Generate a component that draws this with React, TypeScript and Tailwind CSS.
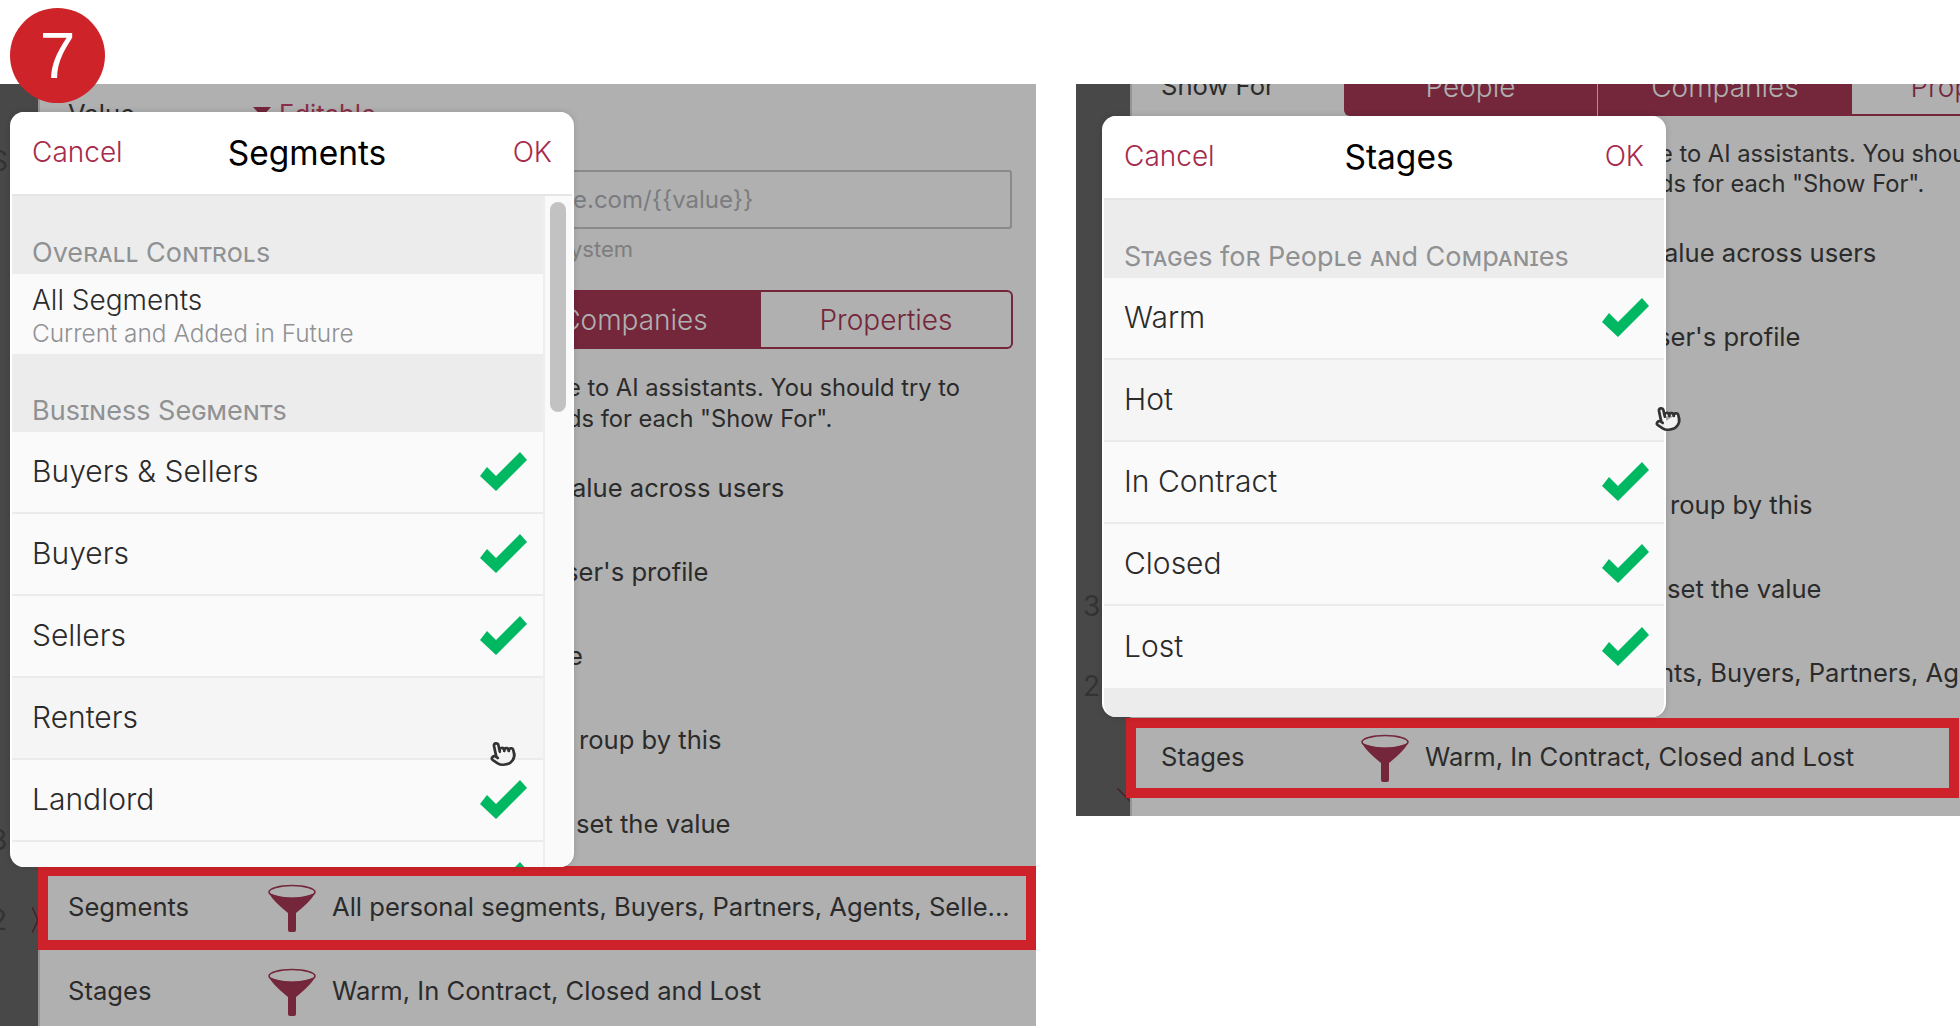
import React from "react";
import { Pointer } from "lucide-react";

const Check = () => (
  <svg width="47" height="39" viewBox="0 0 47 39" className="shrink-0 -mt-[2px]">
    <polygon points="0,24 7,15 16,24 40,0 47,8 16,39" fill="#00b862" />
  </svg>
);

const Funnel = () => (
  <svg width="48" height="48" viewBox="0 0 48 48" className="shrink-0">
    <ellipse cx="24" cy="8" rx="23" ry="6.5" fill="none" stroke="#74263b" strokeWidth="1.6" />
    <path d="M1 9 Q24 18 47 9 Q44 16 28 29 L28 46 Q28 48 26 48 L22 48 Q20 48 20 46 L20 29 Q4 16 1 9 Z" fill="#74263b" />
  </svg>
);

const Hand = ({ className }: { className: string }) => (
  <div className={"absolute blur-[0.5px] " + className}>
    <Pointer size={27} fill="#f2f2f2" stroke="#333333" strokeWidth={2.4} className="-rotate-12" />
  </div>
);

const Section = ({ label }: { label: string }) => (
  <div className="h-[78px] bg-[#ececec] flex items-end pl-[20px] pb-[5px]">
    <span className="text-[27px] leading-[32px] text-[#8f9193] [font-variant:small-caps]">{label}</span>
  </div>
);

const Row = ({ label, checked, hover, last, pr }: { label?: string; checked?: boolean; hover?: boolean; last?: boolean; pr: string }) => (
  <div className={`h-[82px] flex items-center justify-between pl-[20px] ${pr} ${last ? "" : "border-b-2 border-[#ebebeb]"} ${hover ? "bg-[#f5f5f5]" : "bg-[#fbfafb]"}`}>
    <span className="text-[30px] font-light text-[#2b2b2b] -mt-[1px]">{label}</span>
    {checked && <Check />}
  </div>
);

const ModalHeader = ({ title }: { title: string }) => (
  <div className="h-[84px] shrink-0 bg-white border-b-2 border-[#e6e6e6] flex items-center justify-between px-[20px]">
    <span className="w-[100px] text-[28px] font-light text-[#a62b4c] -mt-[3px]">Cancel</span>
    <span className="text-[33.5px] text-black mt-[1px]">{title}</span>
    <span className="w-[70px] text-right text-[28px] font-light text-[#a62b4c] -mt-[3px]">OK</span>
  </div>
);

const Line = ({ text, pl }: { text: string; pl: string }) => (
  <div className={`h-[84px] flex items-center whitespace-nowrap text-[25.6px] text-[#2b2b2b] ${pl}`}>{text}</div>
);

const FieldRow = ({ label, value, className }: { label: string; value: string; className: string }) => (
  <div className={`flex items-center text-[25.6px] text-[#2b2b2b] ${className}`}>
    <span className="w-[200px] shrink-0 -mt-[2px]">{label}</span>
    <Funnel />
    <span className="ml-[16px] whitespace-nowrap -mt-[2px]">{value}</span>
  </div>
);

const Tabs = ({ className, first }: { className: string; first?: string }) => (
  <div className={`flex h-[59px] text-[28px] font-light ${className}`}>
    <div className="w-[254px] shrink-0 flex items-center justify-center bg-[#74263b] text-[#b0b0b0] rounded-l-md border-r border-[#a8929a]">{first}</div>
    <div className="w-[254px] shrink-0 flex items-center justify-center bg-[#74263b] text-[#b0b0b0]">Companies</div>
    <div className="w-[252px] shrink-0 flex items-center justify-center border-2 border-l-0 border-[#74263b] text-[#74263b] rounded-r-md">Properties</div>
  </div>
);

const App = () => {
  return (
    <div className="relative w-[1960px] h-[1028px] bg-white overflow-hidden font-['Inter',sans-serif]">
      <div className="absolute left-[10px] top-[8px] z-20 w-[95px] h-[95px] rounded-full bg-[#ce2329] flex items-center justify-center text-white text-[64px] font-['Liberation_Sans',sans-serif]">
        7
      </div>

      <div className="flex pt-[84px] items-start">
        {/* left screenshot */}
        <div className="relative w-[1036px] h-[942px] shrink-0 flex overflow-hidden bg-[#b0b0b0]">
          <div className="w-[40px] shrink-0 h-full bg-[#484848] border-r-2 border-[#959595] text-[28px] text-[#333333] overflow-hidden">
            <div className="mt-[61px] h-[32px] -ml-[10px] flex items-center">S</div>
            <div className="mt-[647px] h-[32px] -ml-[10px] flex items-center">3</div>
            <div className="mt-[48px] h-[32px] -ml-[10px] flex items-center justify-between">
              2
              <svg width="6" height="26" viewBox="0 0 6 26">
                <path d="M0 0 L6 13 L0 26" fill="none" stroke="#4a1f2c" strokeWidth="1.5" />
              </svg>
            </div>
          </div>

          <div className="flex-1 min-w-0">
            <div className="h-[60px] flex items-center pl-[28px] text-[25.6px] text-[#2b2b2b]">
              <span className="w-[185px]">Value</span>
              <svg width="18" height="10" viewBox="0 0 18 10" className="mr-[8px] -mt-[4px]">
                <polygon points="0,0 18,0 9,10" fill="#74263b" />
              </svg>
              <span className="text-[#8b2f48]">Editable</span>
            </div>
            <div className="mt-[26px] ml-[228px] mr-[24px] h-[59px] border-2 border-[#8a8a8a] rounded-[3px] flex items-center pl-[303px] text-[24px] text-[#7b7c80]">
              e.com/{"{{value}}"}
            </div>
            <div className="h-[40px] flex items-center pl-[530px] text-[22px] text-[#7e7e7e]">ystem</div>
            <Tabs className="mt-[21px] ml-[213px]" />
            <div className="mt-[23px] pl-[527px] text-[23.7px] leading-[31px] text-[#2b2b2b] whitespace-nowrap">
              <p>e to AI assistants. You should try to</p>
              <p>ds for each "Show For".</p>
            </div>
            <div className="mt-[12px]">
              <Line text="alue across users" pl="pl-[532px]" />
              <Line text="ser's profile" pl="pl-[525px]" />
              <Line text="e" pl="pl-[528px]" />
              <Line text="roup by this" pl="pl-[539px]" />
              <Line text="set the value" pl="pl-[536px]" />
            </div>
            <div className="-ml-[2px] h-[84px] border-[10px] border-[#cd2229] relative">
              <FieldRow
                className="h-full pl-[20px]"
                label="Segments"
                value="All personal segments, Buyers, Partners, Agents, Selle..."
              />
            </div>
            <FieldRow className="h-[84px] pl-[28px]" label="Stages" value="Warm, In Contract, Closed and Lost" />
          </div>

          <div className="absolute left-[10px] top-[28px] z-10 w-[564px] h-[755px] rounded-[14px] border-x-2 border-white bg-white shadow-[0_0_6px_rgba(0,0,0,0.15)] overflow-hidden flex flex-col">
            <ModalHeader title="Segments" />
            <div className="flex flex-1 min-h-0">
              <div className="flex-1 min-w-0 overflow-hidden">
                <Section label="Overall Controls" />
                <div className="h-[80px] bg-[#fbfafb] pl-[20px] flex flex-col justify-center">
                  <span className="text-[28px] leading-[36px] font-light text-[#2b2b2b] mt-[1px]">All Segments</span>
                  <span className="text-[24.4px] leading-[30px] font-light text-[#8f9193]">Current and Added in Future</span>
                </div>
                <Section label="Business Segments" />
                <Row label="Buyers & Sellers" checked pr="pr-[16px]" />
                <Row label="Buyers" checked pr="pr-[16px]" />
                <Row label="Sellers" checked pr="pr-[16px]" />
                <Row label="Renters" hover pr="pr-[16px]" />
                <Row label="Landlord" checked pr="pr-[16px]" />
                <Row checked pr="pr-[16px]" />
              </div>
              <div className="w-[29px] shrink-0 bg-[#fafafa] border-l-2 border-[#eeeeee] pl-[5px] pt-[6px]">
                <div className="w-[16px] h-[210px] rounded-full bg-[#c2c2c2]" />
              </div>
            </div>
          </div>
          <Hand className="left-[489px] top-[656px] z-10" />
        </div>

        {/* right screenshot */}
        <div className="relative ml-[40px] flex-1 h-[732px] flex overflow-hidden bg-[#b0b0b0]">
          <div className="w-[56px] shrink-0 h-full bg-[#484848] border-r-2 border-[#959595] text-[28px] text-[#333333] overflow-hidden">
            <div className="mt-[506px] h-[32px] pl-[7px] flex items-center">3</div>
            <div className="mt-[48px] h-[32px] pl-[7px] flex items-center">2</div>
            <svg width="14" height="14" viewBox="0 0 14 14" className="mt-[86px] ml-[41px]">
              <path d="M0 0 L14 14" stroke="#4a1f2c" strokeWidth="1.5" />
            </svg>
          </div>

          <div className="flex-1 min-w-0">
            <div className="-mt-[27px] flex items-center pl-[29px] text-[25.6px] text-[#2b2b2b]">
              <span className="w-[183px] shrink-0">Show For</span>
              <Tabs className="" first="People" />
            </div>
            <div className="mt-[23px] pl-[527px] text-[23.7px] leading-[30px] text-[#2b2b2b] whitespace-nowrap">
              <p>e to AI assistants. You should try to</p>
              <p>ds for each "Show For".</p>
            </div>
            <div className="mt-[12px]">
              <Line text="alue across users" pl="pl-[532px]" />
              <Line text="ser's profile" pl="pl-[525px]" />
              <Line text="" pl="pl-[530px]" />
              <Line text="roup by this" pl="pl-[538px]" />
              <Line text="set the value" pl="pl-[535px]" />
              <Line text="nts, Buyers, Partners, Agents" pl="pl-[527px]" />
            </div>
            <div className="mt-[3px] -ml-[6px] mr-[1px] h-[80px] border-[10px] border-[#cd2229] relative">
              <FieldRow
                className="h-full pl-[25px]"
                label="Stages"
                value="Warm, In Contract, Closed and Lost"
              />
            </div>
          </div>

          <div className="absolute left-[26px] top-[32px] z-10 w-[564px] h-[601px] rounded-[14px] border-x-2 border-white bg-white shadow-[0_0_6px_rgba(0,0,0,0.15)] overflow-hidden flex flex-col">
            <ModalHeader title="Stages" />
            <div className="flex-1 bg-[#ececec]">
              <Section label="Stages for People and Companies" />
              <Row label="Warm" checked pr="pr-[15px]" />
              <Row label="Hot" hover pr="pr-[15px]" />
              <Row label="In Contract" checked pr="pr-[15px]" />
              <Row label="Closed" checked pr="pr-[15px]" />
              <Row label="Lost" checked last pr="pr-[15px]" />
            </div>
          </div>
          <Hand className="left-[578px] top-[321px] z-10" />
        </div>
      </div>
    </div>
  );
};

export default App;
